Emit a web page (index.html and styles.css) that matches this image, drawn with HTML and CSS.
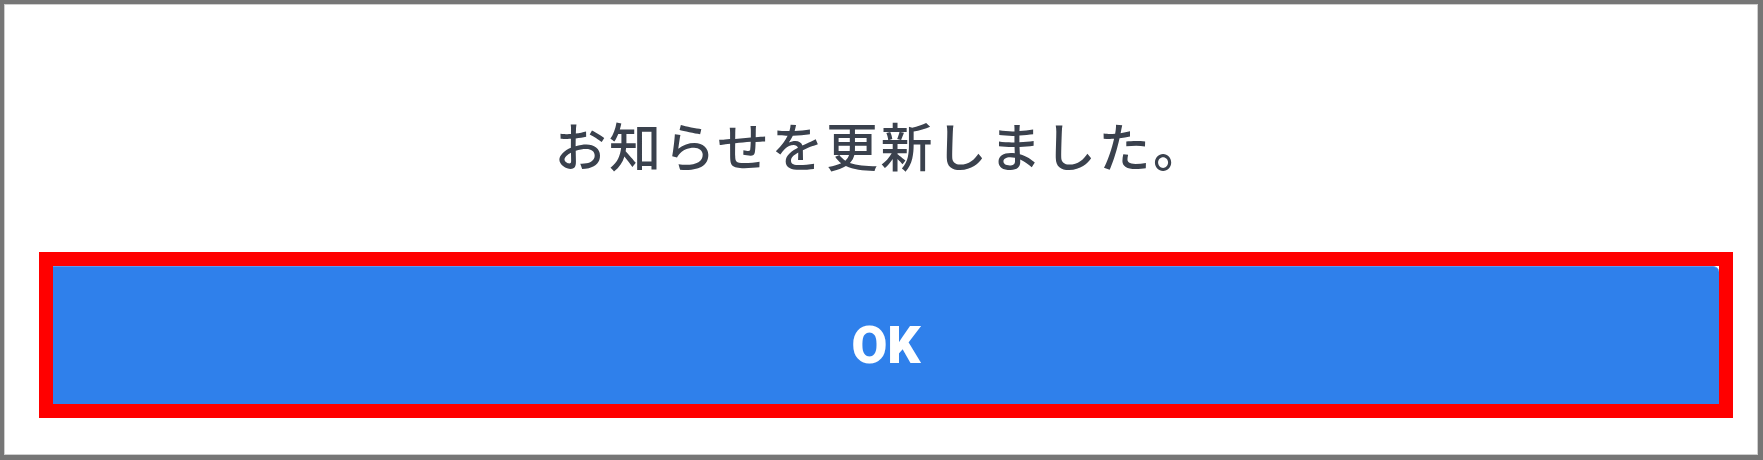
FILE: index.html
```html
<!DOCTYPE html>
<html lang="ja">
<head>
<meta charset="utf-8">
<link rel="stylesheet" href="styles.css">
</head>
<body>
<div class="frame">
  <div class="message">お知らせを更新しました。</div>
  <div class="highlight">
    <div class="ok-button">OK</div>
  </div>
</div>
</body>
</html>
```

FILE: styles.css
```css
html, body {
  margin: 0;
  padding: 0;
  background: #ffffff;
}
.frame {
  box-sizing: border-box;
  width: 1763px;
  height: 460px;
  border-style: solid;
  border-color: #767676;
  border-width: 4px 5px 5px 4px;
  box-shadow: inset 0 0 0 1px #cfcfcf;
  display: flex;
  flex-direction: column;
  background: #ffffff;
}
.message {
  box-sizing: border-box;
  height: 248px;
  padding-top: 115px;
  text-align: center;
  font-family: "Noto Sans CJK JP", "Noto Sans", sans-serif;
  font-weight: 500;
  font-size: 52px;
  line-height: 52px;
  color: #3a414d;
  letter-spacing: 2.5px;
}
.highlight {
  margin: 0 25px 0 35px;
  border: 14px solid #ff0000;
}
.ok-button {
  box-sizing: border-box;
  height: 138px;
  padding-top: 53px;
  background: #2f80eb;
  border-top: 1px solid #5b9af0;
  border-top-right-radius: 6px;
  text-align: center;
  font-family: Roboto, "Liberation Sans", sans-serif;
  font-weight: 900;
  font-size: 52px;
  line-height: 52px;
  color: #ffffff;
}
```
